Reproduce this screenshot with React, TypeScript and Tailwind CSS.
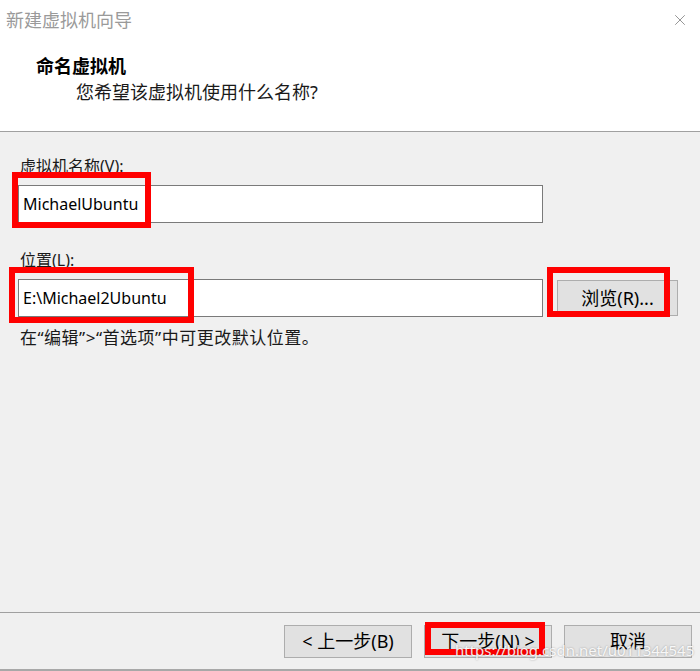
import { X } from 'lucide-react'

const font = { fontFamily: '"Noto Sans", "Noto Sans CJK SC", sans-serif' }

const RedBox = ({ className }: { className: string }) => (
  <div className={`absolute border-[6px] border-[#ff0000] pointer-events-none ${className}`} />
)

const Button = ({ label }: { label: string }) => (
  <button
    type="button"
    className="w-[128px] h-[33px] bg-[#e1e1e1] border border-[#adadad] text-[18px] text-black flex items-center justify-center">
    {label}
  </button>
)

const App = () => {
  return (
    <div
      className="relative w-[700px] h-[671px] bg-[#f0f0f0] overflow-hidden flex flex-col"
      style={font}>
      {/* title bar */}
      <div className="h-[40px] bg-white flex items-center justify-between pl-[6px] pr-[11px]">
        <span className="text-[18px] text-[#9a9a9a] leading-6">新建虚拟机向导</span>
        <X className="w-[18px] h-[18px] text-[#8a8a8a]" strokeWidth={1.2} />
      </div>

      {/* header */}
      <div className="h-[92px] bg-white border-b border-[#a0a0a0] pt-[14px]">
        <div className="pl-[36px] text-[18px] font-bold leading-6 text-black">命名虚拟机</div>
        <div className="pl-[76px] mt-[2px] text-[18px] leading-6 text-[#1a1a1a]">
          您希望该虚拟机使用什么名称?
        </div>
      </div>

      {/* body */}
      <div className="flex-1 px-[18px] pt-[22px]">
        <div className="pl-[2px] text-[16px] leading-6 text-[#1a1a1a]">虚拟机名称(V):</div>
        <div className="mt-[7px] w-[525px] h-[38px] bg-white border border-[#7a7a7a] flex items-center pl-[4px] text-[16px] text-black">
          MichaelUbuntu
        </div>

        <div className="mt-[25px] pl-[2px] text-[16px] leading-6 text-[#1a1a1a]">位置(L):</div>
        <div className="mt-[7px] flex items-center">
          <div className="w-[525px] h-[38px] bg-white border border-[#7a7a7a] flex items-center pl-[4px] text-[16px] text-black">
            E:\Michael2Ubuntu
          </div>
          <button
            type="button"
            className="ml-[14px] w-[121px] h-[36px] bg-[#e1e1e1] border border-[#adadad] text-[18px] text-black flex items-center justify-center">
            浏览(R)...
          </button>
        </div>

        <div className="mt-[9px] pl-[2px] text-[17px] tracking-[0.5px] leading-6 text-[#1a1a1a]">
          在“编辑”&gt;“首选项”中可更改默认位置。
        </div>
      </div>

      {/* footer */}
      <div className="h-[59px] border-t border-[#a0a0a0] border-b-2 border-b-[#a8a8a8] flex justify-end gap-[12px] pr-[8px] pt-[12px]">
        <Button label="< 上一步(B)" />
        <Button label="下一步(N) >" />
        <Button label="取消" />
      </div>

      {/* annotations */}
      <RedBox className="left-[12px] top-[172px] w-[139px] h-[56px]" />
      <RedBox className="left-[9px] top-[267px] w-[185px] h-[56px]" />
      <RedBox className="left-[547px] top-[267px] w-[123px] h-[50px]" />
      <RedBox className="left-[425px] top-[622px] w-[120px] h-[33px]" />

      {/* watermark */}
      <div className="absolute left-[455px] top-[640px] text-[15px] leading-5 text-white/90 [text-shadow:0_0_2px_rgba(0,0,0,0.35)]">
        https://blog.csdn.net/u011344545
      </div>
    </div>
  )
}

export default App
